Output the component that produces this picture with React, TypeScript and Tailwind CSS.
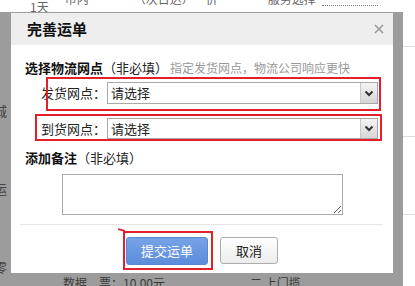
import React from "react";

function Select() {
  return (
    <div className="flex h-full w-[271px] items-stretch border border-[#a9a9a9] bg-white">
      <div className="flex flex-1 items-center pl-[3px] text-[13px] text-[#222]">请选择</div>
      <div className="flex w-[17px] items-center justify-center border-l border-[#c8c8c8] bg-gradient-to-b from-[#f4f4f4] to-[#d6d6d6]">
        <svg width="10" height="7" viewBox="0 0 10 7">
          <path d="M1.5 1.5 L5 5 L8.5 1.5" fill="none" stroke="#333" strokeWidth="2" />
        </svg>
      </div>
    </div>
  );
}

export default function App() {
  return (
    <div className="relative flex h-[286px] w-[415px] flex-col overflow-hidden bg-white font-['Noto_Sans_CJK_SC','Noto_Sans',sans-serif] text-[#333]">
      {/* page behind, top strip */}
      <div className="flex h-[12px] items-end overflow-hidden text-[12px] leading-[14px] text-[#666]">
        <span className="ml-[30px] translate-y-[2px]">1天</span>
        <span className="ml-[16px] -translate-y-[6px]">市内</span>
        <span className="ml-[45px] -translate-y-[6px]">（次日达）一价</span>
        <span className="ml-[50px] -translate-y-[6px]">服务选择</span>
        <span className="ml-[6px] h-[12px] w-[56px] -translate-y-[6px] border-b border-dotted border-[#777]"></span>
      </div>
      <div className="flex h-[274px]">
        {/* gray overlay */}
        <div className="relative flex w-[403px] flex-col bg-[#9c9c9c] pl-[11px] pr-[10px] pt-[1px]">
          <span className="absolute left-[-6px] top-[89px] text-[13px] text-[#444]">城</span>
          <span className="absolute left-[-6px] top-[167px] text-[13px] text-[#444]">运</span>
          <span className="absolute left-[-6px] top-[245px] text-[13px] text-[#444]">零</span>
          {/* dialog */}
          <div className="relative flex h-[260px] flex-col bg-white">
            <div className="flex h-[32px] items-center justify-between bg-[#eeeeee] pl-[16px] pr-[9px]">
              <span className="text-[15px] font-bold text-[#111]">完善运单</span>
              <svg width="10" height="10" viewBox="0 0 10 10">
                <path d="M1 1 L9 9 M9 1 L1 9" stroke="#9a9a9a" strokeWidth="1.6" />
              </svg>
            </div>
            <div className="flex flex-col pt-[15px]">
              <div className="flex h-[16px] items-center pl-[14px] text-[13px] leading-[16px]">
                <span className="font-bold text-[#111]">选择物流网点</span>
                <span className="text-[#222]">（非必填）</span>
                <span className="ml-[2px] text-[12px] text-[#999]">指定发货网点，物流公司响应更快</span>
              </div>
              <div className="mt-[6px] flex h-[22px] items-center">
                <div className="w-[96px] pr-[1px] text-right text-[13px] text-[#222]">发货网点：</div>
                <Select />
              </div>
              <div className="mt-[14px] flex h-[21px] items-center">
                <div className="w-[96px] pr-[1px] text-right text-[13px] text-[#222]">到货网点：</div>
                <Select />
              </div>
              <div className="mt-[11px] flex h-[16px] items-center pl-[14px] text-[13px] leading-[16px]">
                <span className="font-bold text-[#111]">添加备注</span>
                <span className="text-[#222]">（非必填）</span>
              </div>
              <textarea className="ml-[51px] mt-[8px] h-[41px] w-[281px] resize border border-[#aaaaaa] bg-white outline-none" />
              <div className="ml-[9px] mr-[10px] mt-[9px] h-px bg-[#e6e6e6]"></div>
              <div className="mt-[12px] flex justify-center gap-[12px]">
                <button className="h-[28px] w-[82px] rounded-[3px] border border-[#5a88d0] bg-gradient-to-b from-[#77a3e8] to-[#5b8ddb] text-[13px] text-white">
                  提交运单
                </button>
                <button className="h-[27px] w-[58px] rounded-[3px] border border-[#acacac] bg-gradient-to-b from-[#ffffff] to-[#ececec] text-[13px] text-[#222]">
                  取消
                </button>
              </div>
            </div>
            {/* annotation boxes */}
            <div className="pointer-events-none absolute left-[35px] top-[64px] h-[34px] w-[335px] border-2 border-[#e3202a]"></div>
            <div className="pointer-events-none absolute left-[24px] top-[101px] h-[27px] w-[347px] border-2 border-[#e3202a]"></div>
            <div className="pointer-events-none absolute left-[112px] top-[218px] h-[39px] w-[90px] border-2 border-[#e3202a]"></div>
            <div className="pointer-events-none absolute left-[107px] top-[216px] h-[2px] w-[7px] rotate-[15deg] bg-[#e3202a]"></div>
          </div>
          <div className="flex h-[13px] items-start overflow-hidden text-[12px] leading-[14px] text-[#3a3a3a]">
            <span className="ml-[52px] mt-[3px]">数据　票：10.00元</span>
            <span className="ml-[85px] mt-[3px]">二 上门揽</span>
          </div>
        </div>
        {/* right strip of page */}
        <div className="flex flex-1 flex-col bg-white">
          <div className="mt-[34px] h-px bg-[#dddddd]"></div>
          <div className="mt-[89px] h-px bg-[#dddddd]"></div>
          <div className="mt-[77px] h-px bg-[#dddddd]"></div>
        </div>
      </div>
    </div>
  );
}
